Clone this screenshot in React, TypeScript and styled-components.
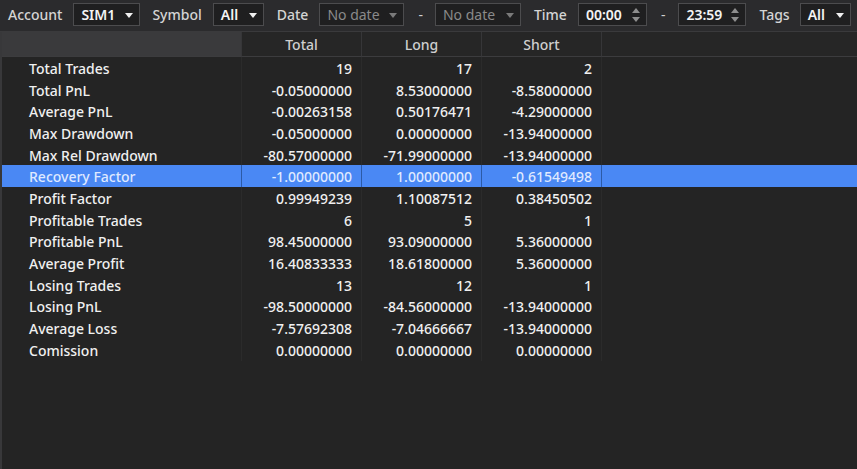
import React from "react";
import styled, { createGlobalStyle } from "styled-components";

const Global = createGlobalStyle`
  html, body { margin: 0; padding: 0; background: #242424; }
  body { font-family: "Noto Sans", "DejaVu Sans", sans-serif; }
  #root { height: 469px; }
`;

const Page = styled.div`
  width: 857px;
  height: 469px;
  display: flex;
  flex-direction: column;
  background: #242424;
  color: #ececec;
  font-size: 14px;
  overflow: hidden;
`;

const Toolbar = styled.div`
  height: 32px;
  flex: none;
  display: flex;
  align-items: center;
  padding: 0 0 2px 8px;
  background: #2b2b2d;
  border-bottom: 1px solid #3a3a3c;
  box-sizing: border-box;
`;

const Label = styled.span<{ $ml?: number }>`
  color: #d4d4d4;
  font-size: 14px;
  font-weight: 500;
  margin-left: ${(p) => p.$ml ?? 0}px;
  white-space: nowrap;
`;

const Dash = styled.span<{ $ml: number; $mr: number }>`
  color: #cfcfcf;
  margin-left: ${(p) => p.$ml}px;
  margin-right: ${(p) => p.$mr}px;
`;

const Field = styled.div<{ $w: number; $ml: number; $disabled?: boolean }>`
  box-sizing: border-box;
  width: ${(p) => p.$w}px;
  height: 23px;
  margin-left: ${(p) => p.$ml}px;
  border: 1px solid #4c4c4e;
  background: #1f1f20;
  display: flex;
  align-items: center;
  justify-content: space-between;
  padding: 0 6px 0 7px;
  color: ${(p) => (p.$disabled ? "#8a8a8a" : "#f4f4f4")};
  font-weight: ${(p) => (p.$disabled ? 400 : 600)};
  font-size: 14px;
`;

const Caret = styled.span<{ $disabled?: boolean }>`
  width: 0;
  height: 0;
  border-left: 4px solid transparent;
  border-right: 4px solid transparent;
  border-top: 5px solid ${(p) => (p.$disabled ? "#7a7a7a" : "#f0f0f0")};
  margin-top: 1px;
`;

const Spin = styled.span`
  display: flex;
  flex-direction: column;
  gap: 4px;
  align-items: center;
`;

const SpinUp = styled.span`
  width: 0;
  height: 0;
  border-left: 4px solid transparent;
  border-right: 4px solid transparent;
  border-bottom: 5px solid #8e8e8e;
`;

const SpinDown = styled.span`
  width: 0;
  height: 0;
  border-left: 4px solid transparent;
  border-right: 4px solid transparent;
  border-top: 5px solid #8e8e8e;
`;

const Table = styled.div`
  flex: 1;
  border-left: 2px solid #38383a;
  display: flex;
  flex-direction: column;
`;

const Grid = styled.div`
  display: grid;
  grid-template-columns: 240px 120px 120px 120px 1fr;
`;

const HeadCell = styled.div<{ $first?: boolean; $filler?: boolean }>`
  height: 25px;
  box-sizing: border-box;
  background: ${(p) => (p.$first ? "#3a3a3c" : "#262626")};
  border-right: ${(p) => (p.$filler ? "none" : "1px solid #363638")};
  border-bottom: 1px solid #3c3c3e;
  display: flex;
  align-items: center;
  justify-content: center;
  padding-top: 1px;
  color: #cfcfcf;
  font-weight: 500;
  font-size: 14px;
`;

const Cell = styled.div<{ $sel?: boolean; $label?: boolean; $filler?: boolean }>`
  height: 21.7px;
  box-sizing: border-box;
  background: ${(p) => (p.$sel ? "#4a88f4" : "#242424")};
  border-right: ${(p) => (p.$filler ? "none" : `1px solid ${p.$sel ? "#2c5aa6" : "#2b2b2b"}`)};
  display: flex;
  align-items: center;
  justify-content: ${(p) => (p.$label ? "flex-start" : "flex-end")};
  padding: ${(p) => (p.$label ? "2px 0 0 27px" : "2px 9px 0 0")};
  color: ${(p) => (p.$sel ? "#dfe9ff" : "#f0f0f0")};
  font-weight: 500;
  font-size: 14px;
  white-space: nowrap;
  line-height: 1;
`;

const rows: [string, string, string, string][] = [
  ["Total Trades", "19", "17", "2"],
  ["Total PnL", "-0.05000000", "8.53000000", "-8.58000000"],
  ["Average PnL", "-0.00263158", "0.50176471", "-4.29000000"],
  ["Max Drawdown", "-0.05000000", "0.00000000", "-13.94000000"],
  ["Max Rel Drawdown", "-80.57000000", "-71.99000000", "-13.94000000"],
  ["Recovery Factor", "-1.00000000", "1.00000000", "-0.61549498"],
  ["Profit Factor", "0.99949239", "1.10087512", "0.38450502"],
  ["Profitable Trades", "6", "5", "1"],
  ["Profitable PnL", "98.45000000", "93.09000000", "5.36000000"],
  ["Average Profit", "16.40833333", "18.61800000", "5.36000000"],
  ["Losing Trades", "13", "12", "1"],
  ["Losing PnL", "-98.50000000", "-84.56000000", "-13.94000000"],
  ["Average Loss", "-7.57692308", "-7.04666667", "-13.94000000"],
  ["Comission", "0.00000000", "0.00000000", "0.00000000"],
];

export default function App() {
  return (
    <Page>
      <Global />
      <Toolbar>
        <Label>Account</Label>
        <Field $w={67} $ml={11}>
          SIM1 <Caret />
        </Field>
        <Label $ml={12}>Symbol</Label>
        <Field $w={51} $ml={11}>
          All <Caret />
        </Field>
        <Label $ml={13}>Date</Label>
        <Field $w={85} $ml={11} $disabled>
          No date <Caret $disabled />
        </Field>
        <Dash $ml={14} $mr={12}>-</Dash>
        <Field $w={86} $ml={0} $disabled>
          No date <Caret $disabled />
        </Field>
        <Label $ml={13}>Time</Label>
        <Field $w={69} $ml={11}>
          00:00
          <Spin>
            <SpinUp />
            <SpinDown />
          </Spin>
        </Field>
        <Dash $ml={14} $mr={13}>-</Dash>
        <Field $w={68} $ml={0}>
          23:59
          <Spin>
            <SpinUp />
            <SpinDown />
          </Spin>
        </Field>
        <Label $ml={13}>Tags</Label>
        <Field $w={51} $ml={10}>
          All <Caret />
        </Field>
      </Toolbar>
      <Table>
        <Grid>
          <HeadCell $first />
          <HeadCell>Total</HeadCell>
          <HeadCell>Long</HeadCell>
          <HeadCell>Short</HeadCell>
          <HeadCell $filler />
          {rows.map((r) => {
            const sel = r[0] === "Recovery Factor";
            return (
              <React.Fragment key={r[0]}>
                <Cell $label $sel={sel}>{r[0]}</Cell>
                <Cell $sel={sel}>{r[1]}</Cell>
                <Cell $sel={sel}>{r[2]}</Cell>
                <Cell $sel={sel}>{r[3]}</Cell>
                <Cell $sel={sel} $filler />
              </React.Fragment>
            );
          })}
        </Grid>
      </Table>
    </Page>
  );
}
